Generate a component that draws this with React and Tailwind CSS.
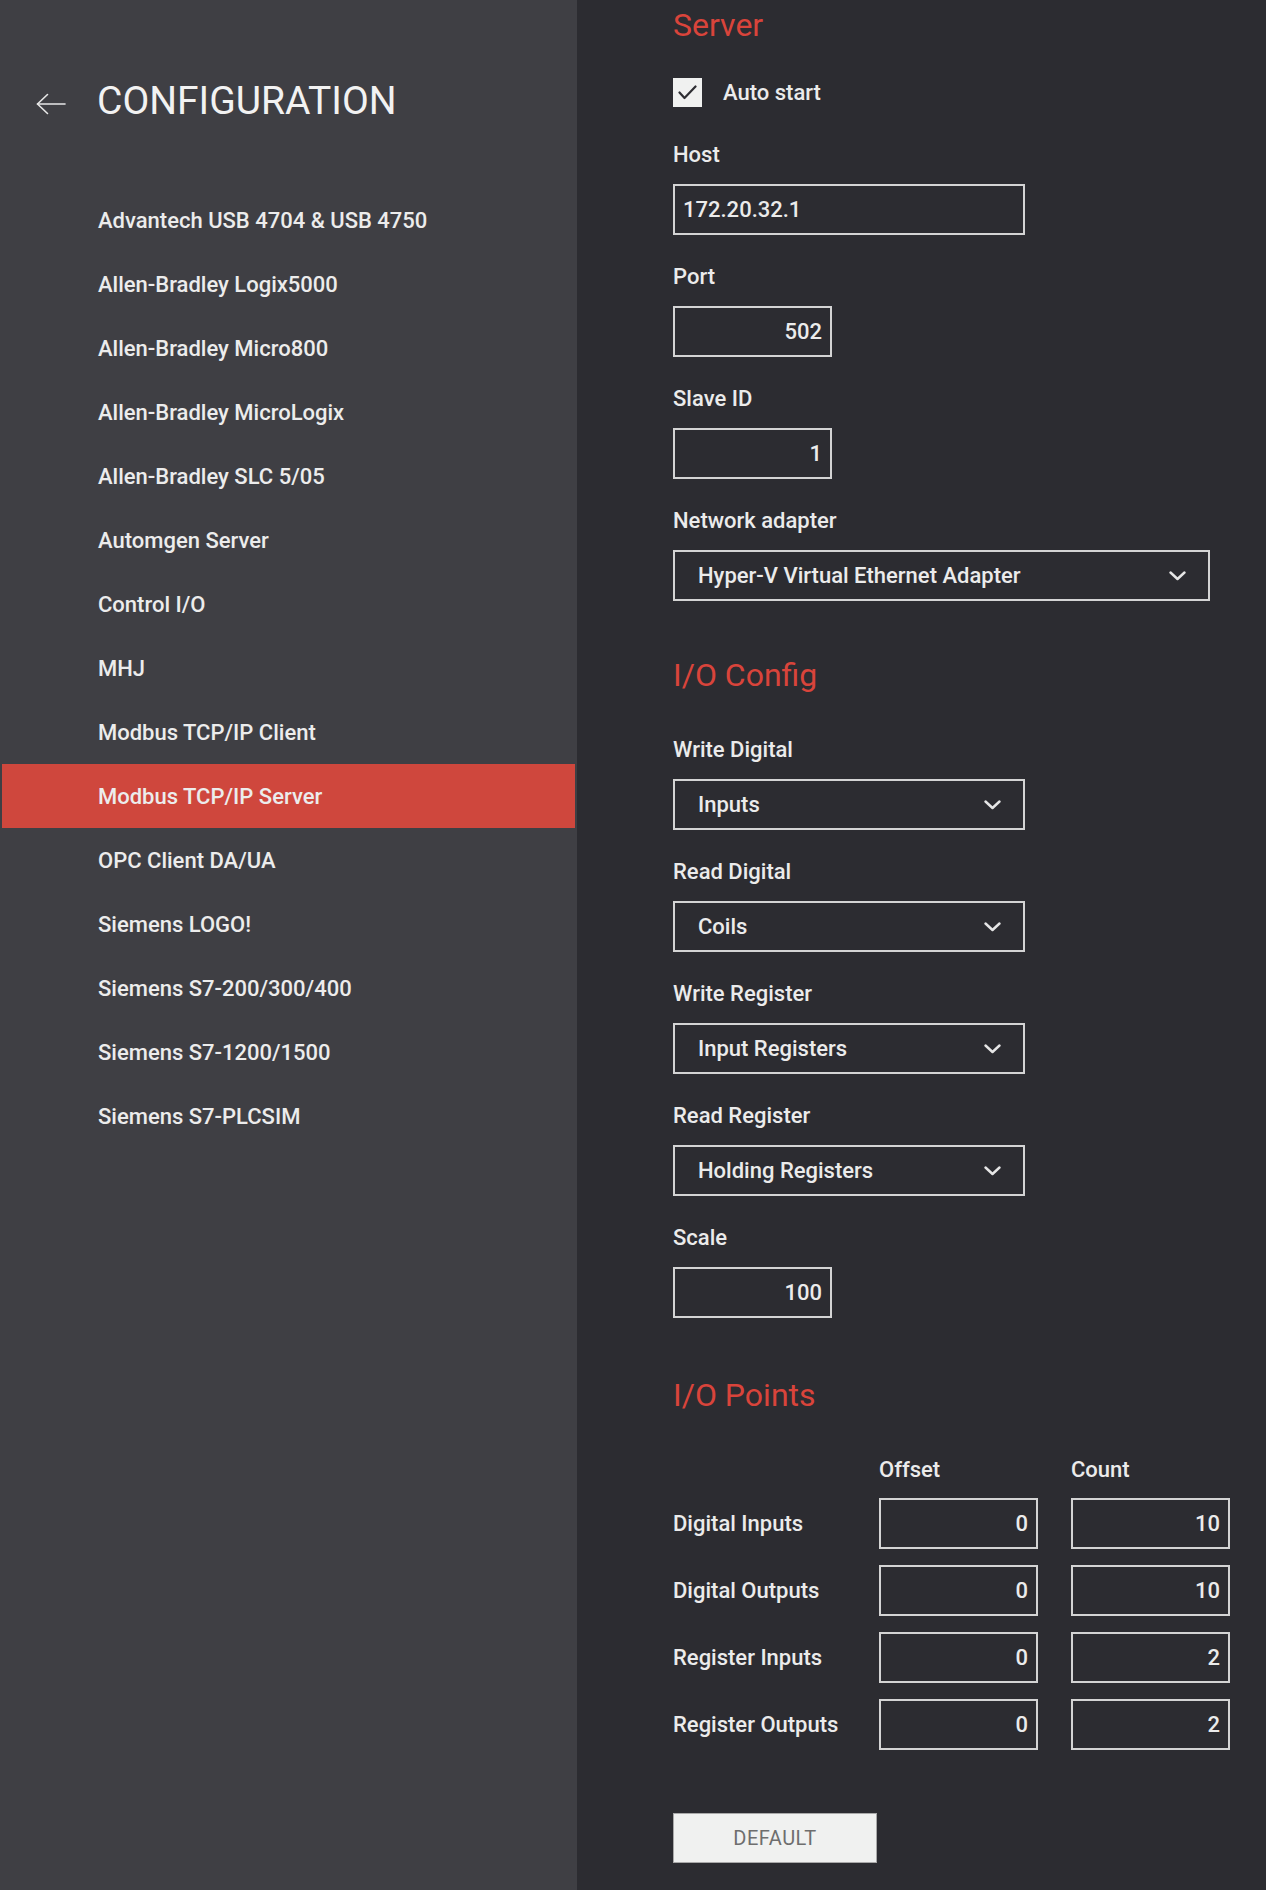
import React from 'react';

const devices = [
  'Advantech USB 4704 & USB 4750',
  'Allen-Bradley Logix5000',
  'Allen-Bradley Micro800',
  'Allen-Bradley MicroLogix',
  'Allen-Bradley SLC 5/05',
  'Automgen Server',
  'Control I/O',
  'MHJ',
  'Modbus TCP/IP Client',
  'Modbus TCP/IP Server',
  'OPC Client DA/UA',
  'Siemens LOGO!',
  'Siemens S7-200/300/400',
  'Siemens S7-1200/1500',
  'Siemens S7-PLCSIM',
];

const ioPoints = [
  { label: 'Digital Inputs', offset: 0, count: 10 },
  { label: 'Digital Outputs', offset: 0, count: 10 },
  { label: 'Register Inputs', offset: 0, count: 2 },
  { label: 'Register Outputs', offset: 0, count: 2 },
];

const Chevron = () => (
  <svg width="17" height="10" viewBox="0 0 17 10" fill="none" stroke="#e6e6e6" strokeWidth="2.4" strokeLinecap="round" strokeLinejoin="round">
    <polyline points="1.5,1.5 8.5,8 15.5,1.5" />
  </svg>
);

const Label = ({ children }) => (
  <div className="text-[22px] leading-[26px] font-medium text-[#ebebeb] mb-4">{children}</div>
);

const TextBox = ({ value, width, right }) => (
  <div
    className={`h-[51px] border-2 border-[#d4d4d4] flex items-center text-[22px] font-medium text-[#ebebeb] ${width} ${right ? 'justify-end pr-[8px]' : 'pl-[8px]'}`}
  >
    {value}
  </div>
);

const Select = ({ value, width }) => (
  <div className={`h-[51px] border-2 border-[#d4d4d4] flex items-center justify-between pl-[23px] pr-[22px] text-[22px] font-medium text-[#ebebeb] ${width}`}>
    <span>{value}</span>
    <Chevron />
  </div>
);

const Field = ({ label, children }) => (
  <div className="mb-[29px]">
    <Label>{label}</Label>
    {children}
  </div>
);

const Heading = ({ children, className = '' }) => (
  <h2 className={`text-[32px] leading-[37px] text-[#d9443b] ${className}`}>{children}</h2>
);

export default function App() {
  return (
    <div className="flex h-[1890px] w-full overflow-hidden [font-family:Roboto,'Noto_Sans',sans-serif]">
      {/* sidebar */}
      <aside className="w-[577px] shrink-0 bg-[#3f3f44]">
        <div className="h-[188px] pt-[79px] flex items-start">
          <svg className="ml-[36px] mt-[14px]" width="30" height="22" viewBox="0 0 30 22" fill="none" stroke="#e8e8e8" strokeWidth="1.6" strokeLinecap="round" strokeLinejoin="round">
            <line x1="1.5" y1="11" x2="29" y2="11" />
            <polyline points="11.5,1.5 1.5,11 11.5,20.5" />
          </svg>
          <h1 className="ml-[31px] text-[39px] leading-[45px] text-[#f2f2f2]">CONFIGURATION</h1>
        </div>
        <nav>
          {devices.map((d) => {
            const active = d === 'Modbus TCP/IP Server';
            return (
              <div
                key={d}
                className={`h-16 flex items-center text-[22px] font-medium text-[#ececec] ${active ? 'bg-[#cf473d] mx-[2px] pl-[96px]' : 'pl-[98px]'}`}
              >
                {d}
              </div>
            );
          })}
        </nav>
      </aside>

      {/* settings */}
      <main className="flex-1 flex flex-col items-start bg-[#2c2c31] pl-[96px] pt-[7px]">
        <Heading>Server</Heading>

        <div className="mt-[32px] mb-[33px] flex items-center">
          <div className="w-[29px] h-[29px] bg-[#f0f1f0] flex items-center justify-center">
            <svg width="19" height="15" viewBox="0 0 19 15" fill="none" stroke="#2e2e33" strokeWidth="2.2" strokeLinecap="round" strokeLinejoin="round">
              <polyline points="1.5,7.5 6.5,13 17.5,1.5" />
            </svg>
          </div>
          <span className="ml-[21px] text-[22px] font-medium text-[#ebebeb]">Auto start</span>
        </div>

        <Field label="Host">
          <TextBox value="172.20.32.1" width="w-[352px]" />
        </Field>
        <Field label="Port">
          <TextBox value="502" width="w-[159px]" right />
        </Field>
        <Field label="Slave ID">
          <TextBox value="1" width="w-[159px]" right />
        </Field>
        <Field label="Network adapter">
          <Select value="Hyper-V Virtual Ethernet Adapter" width="w-[537px]" />
        </Field>

        <Heading className="mt-[27px] mb-[43px]">I/O Config</Heading>

        <Field label="Write Digital">
          <Select value="Inputs" width="w-[352px]" />
        </Field>
        <Field label="Read Digital">
          <Select value="Coils" width="w-[352px]" />
        </Field>
        <Field label="Write Register">
          <Select value="Input Registers" width="w-[352px]" />
        </Field>
        <Field label="Read Register">
          <Select value="Holding Registers" width="w-[352px]" />
        </Field>
        <Field label="Scale">
          <TextBox value="100" width="w-[159px]" right />
        </Field>

        <Heading className="mt-[30px] mb-[43px]">I/O Points</Heading>

        <div className="grid grid-cols-[173px_159px_159px] gap-x-[33px] gap-y-[16px] items-center">
          <div />
          <div className="text-[22px] leading-[26px] font-medium text-[#ebebeb] -mb-px">Offset</div>
          <div className="text-[22px] leading-[26px] font-medium text-[#ebebeb] -mb-px">Count</div>
          {ioPoints.map((p) => (
            <React.Fragment key={p.label}>
              <div className="text-[22px] font-medium text-[#ebebeb] whitespace-nowrap">{p.label}</div>
              <TextBox value={p.offset} width="w-[159px]" right />
              <TextBox value={p.count} width="w-[159px]" right />
            </React.Fragment>
          ))}
        </div>

        <button className="mt-[63px] w-[204px] h-[50px] bg-[#f0f1f0] border border-[#a9a9a9] text-[20px] text-[#6e6e6e] tracking-wide">
          DEFAULT
        </button>
      </main>
    </div>
  );
}
